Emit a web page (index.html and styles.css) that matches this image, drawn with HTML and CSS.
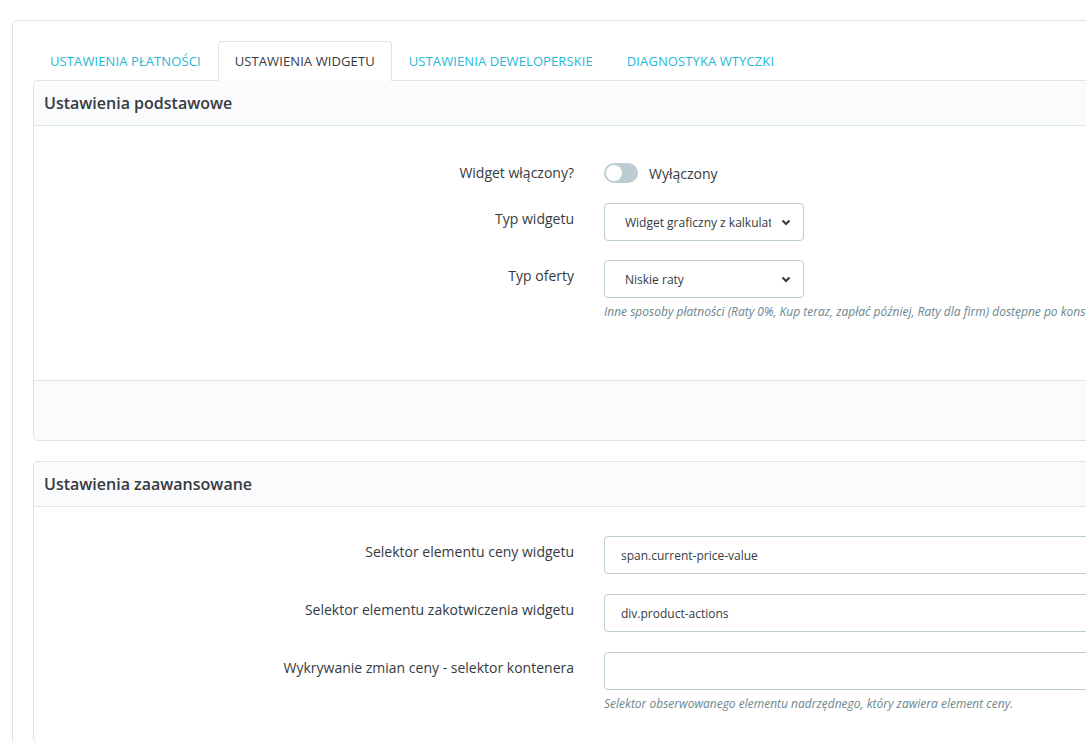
FILE: index.html
```html
<!DOCTYPE html>
<html lang="pl">
<head>
<meta charset="utf-8">
<title>Ustawienia widgetu</title>
<link rel="stylesheet" href="styles.css">
</head>
<body>
<div class="card">
  <ul class="tabs">
    <li class="tab">Ustawienia płatności</li>
    <li class="tab active">Ustawienia widgetu</li>
    <li class="tab">Ustawienia deweloperskie</li>
    <li class="tab">Diagnostyka wtyczki</li>
  </ul>

  <section class="panel">
    <header class="panel-heading">Ustawienia podstawowe</header>
    <div class="panel-body basic">
      <div class="row row-switch">
        <label class="label">Widget włączony?</label>
        <div class="control switch-wrap">
          <span class="switch"><span class="knob"></span></span>
          <span class="switch-text">Wyłączony</span>
        </div>
      </div>
      <div class="row">
        <label class="label">Typ widgetu</label>
        <div class="control">
          <div class="select"><span class="select-text">Widget graficzny z kalkulatorem</span>
            <svg class="chev" width="10" height="7" viewBox="0 0 10 7"><path d="M1.5 1.5 L5 5 L8.5 1.5" fill="none" stroke="#363a41" stroke-width="2"/></svg>
          </div>
        </div>
      </div>
      <div class="row">
        <label class="label">Typ oferty</label>
        <div class="control">
          <div class="select"><span class="select-text">Niskie raty</span>
            <svg class="chev" width="10" height="7" viewBox="0 0 10 7"><path d="M1.5 1.5 L5 5 L8.5 1.5" fill="none" stroke="#363a41" stroke-width="2"/></svg>
          </div>
          <p class="help">Inne sposoby płatności (Raty 0%, Kup teraz, zapłać później, Raty dla firm) dostępne po konsultacji z opiekunem.</p>
        </div>
      </div>
    </div>
    <footer class="panel-footer"></footer>
  </section>

  <section class="panel">
    <header class="panel-heading">Ustawienia zaawansowane</header>
    <div class="panel-body advanced">
      <div class="row">
        <label class="label">Selektor elementu ceny widgetu</label>
        <div class="control"><div class="input">span.current-price-value</div></div>
      </div>
      <div class="row">
        <label class="label">Selektor elementu zakotwiczenia widgetu</label>
        <div class="control"><div class="input">div.product-actions</div></div>
      </div>
      <div class="row">
        <label class="label">Wykrywanie zmian ceny - selektor kontenera</label>
        <div class="control">
          <div class="input"></div>
          <p class="help">Selektor obserwowanego elementu nadrzędnego, który zawiera element ceny.</p>
        </div>
      </div>
    </div>
  </section>
</div>
</body>
</html>
```
FILE: styles.css
```css
html, body {
  margin: 0;
  padding: 0;
  background: #fff;
  overflow: hidden;
}
body {
  font-family: "Open Sans", "Noto Sans", sans-serif;
  color: #363a41;
  width: 1086px;
  height: 742px;
}
.card {
  margin: 20px 0 0 12px;
  width: 1300px;
  border: 1px solid #e1e3e5;
  border-radius: 5px;
  padding: 20px 20px 40px 20px;
  background: #fff;
}
.tabs {
  list-style: none;
  margin: 0;
  padding: 0;
  display: flex;
  height: 39px;
}
.tab {
  padding: 0 16px;
  border: 1px solid transparent;
  border-bottom: none;
  height: 39px;
  line-height: 39px;
  font-size: 13px;
  letter-spacing: 0.1px;
  text-transform: uppercase;
  color: #25b9d7;
}
.tab.active {
  color: #363a41;
  border-color: #dfe3e6;
  border-radius: 4px 4px 0 0;
  background: #fff;
}
.panel {
  border: 1px solid #dfe3e6;
  border-radius: 5px;
  margin-bottom: 20px;
  background: #fff;
}
.panel-heading {
  height: 44px;
  line-height: 44px;
  padding: 0 10px;
  background: #fafbfc;
  border-bottom: 1px solid #dbe6e9;
  font-size: 16px;
  font-weight: 600;
  border-radius: 5px 5px 0 0;
}
.panel-body.basic {
  padding: 36px 0 60px;
}
.panel-body.advanced {
  padding: 29px 0 30px;
}
.row {
  display: grid;
  grid-template-columns: 540px 1fr;
  column-gap: 30px;
  align-items: start;
  margin-bottom: 19px;
}
.row:last-child {
  margin-bottom: 0;
}
.advanced .row {
  margin-bottom: 20px;
}
.advanced .row:last-child {
  margin-bottom: 0;
}
.label {
  text-align: right;
  font-size: 14px;
  line-height: 20px;
  padding-top: 6px;
}
.row-switch {
  align-items: center;
}
.row-switch .label {
  padding-top: 0;
}
.switch-wrap {
  display: flex;
  align-items: center;
  gap: 11px;
  height: 22px;
}
.switch {
  width: 34px;
  height: 20px;
  border-radius: 10px;
  background: #bbcdd2;
  position: relative;
  display: block;
}
.knob {
  position: absolute;
  left: 2px;
  top: 2px;
  width: 16px;
  height: 16px;
  border-radius: 50%;
  background: #fff;
}
.switch-text {
  font-size: 14px;
}
.select {
  width: 200px;
  height: 38px;
  box-sizing: border-box;
  border: 1px solid #bbcdd2;
  border-radius: 4px;
  display: flex;
  align-items: center;
  padding: 0 12px 0 20px;
  font-size: 12px;
  background: #fff;
}
.select-text {
  flex: 1;
  white-space: nowrap;
  overflow: hidden;
}
.chev {
  margin-left: 10px;
  flex: none;
}
.input {
  height: 38px;
  box-sizing: border-box;
  border: 1px solid #bbcdd2;
  border-radius: 4px;
  display: flex;
  align-items: center;
  padding: 0 16px;
  font-size: 12px;
  background: #fff;
}
.help {
  margin: 6px 0 0;
  font-size: 12px;
  font-style: italic;
  color: #6c868e;
  white-space: nowrap;
  line-height: 16px;
}
.panel-footer {
  height: 59px;
  background: #fafbfc;
  border-top: 1px solid #dfe3e6;
  border-radius: 0 0 5px 5px;
}
```
